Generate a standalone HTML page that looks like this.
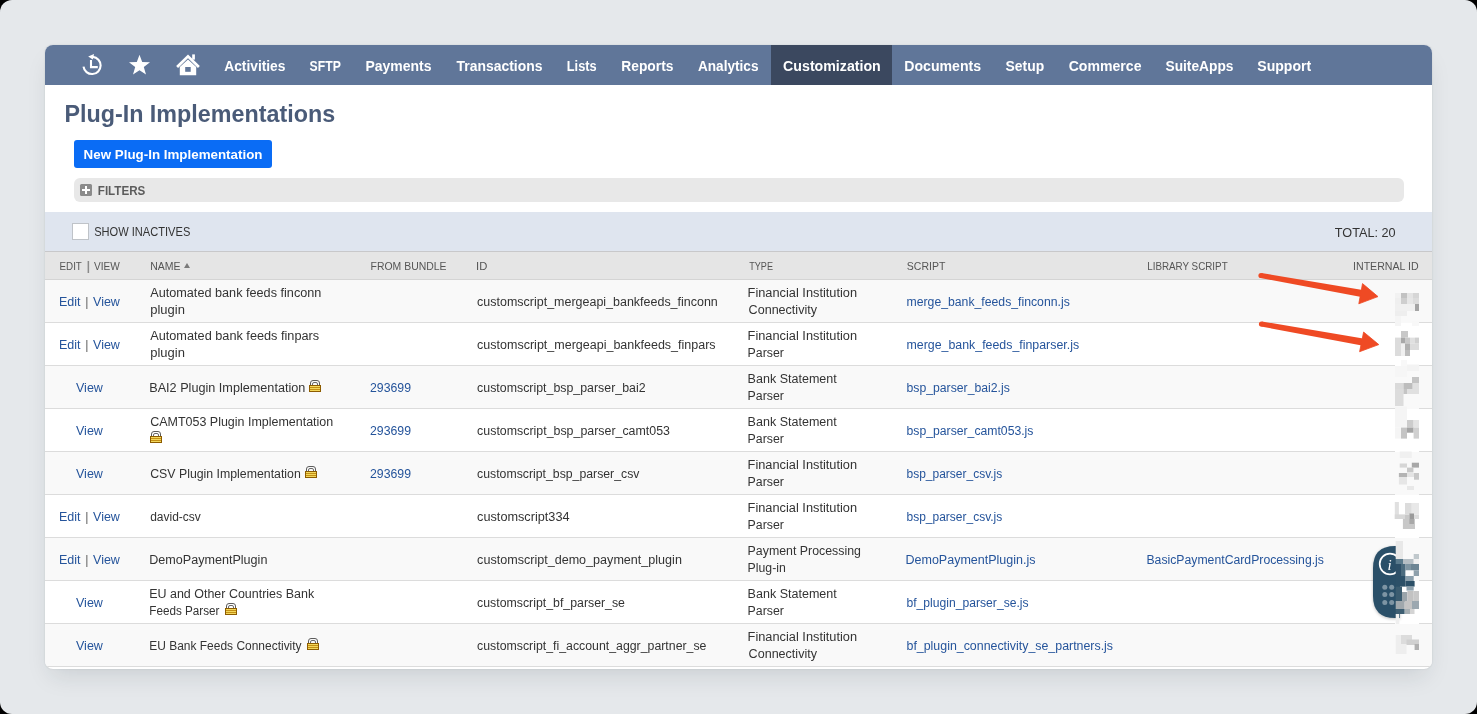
<!DOCTYPE html>
<html><head><meta charset="utf-8">
<style>
*{box-sizing:border-box;margin:0;padding:0}
html,body{width:1477px;height:714px;overflow:hidden;background:#000}
body{font-family:"Liberation Sans",sans-serif;position:relative}
#bg{position:absolute;left:0;top:0;width:1477px;height:714px;background:#e5e8eb;overflow:hidden;will-change:transform}
#corners{position:absolute;left:0;top:0;width:1477px;height:714px;border-radius:12px;box-shadow:0 0 0 40px #000}
#card{position:absolute;left:45px;top:45px;width:1387px;height:624px;background:#fff;border-radius:8px;overflow:hidden;box-shadow:0 0 2px rgba(20,30,40,0.13), 0 12px 24px -6px rgba(20,35,50,0.13)}
#nav{position:absolute;left:0;top:0;width:1387px;height:40px;background:#607699}
#nav .act{position:absolute;left:726px;top:0;width:121px;height:40px;background:#3b485f}
.ni{position:absolute;top:1px;height:38px;line-height:40px;color:#fff;font-weight:bold;font-size:14px;white-space:nowrap;transform-origin:0 0}
.abs{position:absolute;white-space:nowrap;transform-origin:0 0}
#title{left:20px;top:54px;font-size:23.2px;font-weight:bold;color:#4a5b78;line-height:30px}
#btn{position:absolute;left:29px;top:95px;width:198px;height:28px;background:#0a6cf5;border-radius:3px}
#btnt{left:38px;top:96px;height:26px;color:#fff;font-weight:bold;font-size:13px;line-height:28px}
#filters{position:absolute;left:29px;top:133px;width:1330px;height:24px;background:#e8e8e8;border-radius:6px}
#plus{position:absolute;left:6px;top:6px;width:12px;height:12px;background:#8b8b8b;border-radius:1.5px}
#plus:before{content:"";position:absolute;left:2px;top:5px;width:8px;height:2px;background:#fff}
#plus:after{content:"";position:absolute;left:5px;top:2px;width:2px;height:8px;background:#fff}
#ftxt{left:53px;top:136px;font-size:12.5px;font-weight:bold;color:#5c5c5c;line-height:20px}
#bluebar{position:absolute;left:0;top:167px;width:1387px;height:40px;background:#dfe5ef;border-bottom:1px solid #c8c8ca}
#cb{position:absolute;left:27px;top:178px;width:17px;height:17px;background:#fff;border:1px solid #bfc3c8}
#si{left:49px;top:177px;font-size:12px;color:#333;line-height:20px}
#total{left:1290px;top:178px;font-size:12.5px;color:#333;line-height:20px}
#hdr{position:absolute;left:0;top:207px;width:1387px;height:28px;background:#e5e5e5;border-bottom:1px solid #d4d4d4}
.h{position:absolute;top:213px;font-size:11px;color:#555;line-height:16px;white-space:nowrap;transform-origin:0 0}
.row{position:absolute;left:0;width:1387px;height:43px;border-bottom:1px solid #dcdcdc}
.c{position:absolute;top:1px;height:42px;display:flex;align-items:center;font-size:12.5px;line-height:17px;color:#333;white-space:nowrap}
.c a{color:#25549b;text-decoration:none}
.sep{color:#8f8f8f;font-size:13.5px;display:inline-block;vertical-align:-0.5px;transform:scaleX(1.3);margin:0 1.2px 0 0.8px}
.c.one{top:1px}
.c.c0{top:1px}
.c0{left:14px}
.c0v{left:31px}
.c1{left:105px}
.c2{left:325px}
.c3{left:432px}
.c4{left:704px}
.c5{left:862px}
.c6{left:1102px}
.lk{display:inline-block;width:12px;height:12px}
.ln{display:inline-block;transform-origin:0 0}
#rows{position:absolute;left:0;top:0}
</style></head><body>
<div id="bg">
<div id="card">
  <div id="nav">
    <div class="act"></div>
    <svg class="abs" style="left:36px;top:9px" width="22" height="22" viewBox="0 0 22 22">
      <path d="M2.5 12.6 A8.6 8.6 0 1 0 11.8 2.9" fill="none" stroke="#fff" stroke-width="2.1"/>
      <path d="M7.2 2.5 L13 0 L11.8 5.6 Z" fill="#fff"/>
      <path d="M10 6 V13.1 H16.8" fill="none" stroke="#fff" stroke-width="2.1"/>
    </svg>
    <svg class="abs" style="left:83px;top:9px" width="23" height="22" viewBox="0 0 23 22">
      <path d="M11.5 0.8 L14.2 8.1 L22 8.2 L15.8 13 L18 20.6 L11.5 16.2 L5 20.4 L7.2 12.9 L1 8.2 L8.8 8.1 Z" fill="#fff"/>
    </svg>
    <svg class="abs" style="left:130px;top:8px" width="26" height="24" viewBox="0 0 26 24">
      <path d="M2.1 14 L13 3.3 L23.9 14" fill="none" stroke="#fff" stroke-width="2.7"/>
      <rect x="17.2" y="1.4" width="2.7" height="5.2" fill="#fff"/>
      <path d="M4.8 14 L13 6.6 L21.2 14 V22.2 H4.8 Z" fill="#fff"/>
      <rect x="10.2" y="14" width="5.5" height="4.8" fill="#607699"/>
    </svg>
    <span id="n0" class="ni" style="left:179px;transform:translateX(0.20px) scaleX(0.9839)">Activities</span>
    <span id="n1" class="ni" style="left:265px;transform:translateX(-0.40px) scaleX(0.8722)">SFTP</span>
    <span id="n2" class="ni" style="left:320px;transform:translateX(0.40px) scaleX(0.9985)">Payments</span>
    <span id="n3" class="ni" style="left:411px;transform:translateX(0.60px) scaleX(0.9930)">Transactions</span>
    <span id="n4" class="ni" style="left:522px;transform:translateX(-0.20px) scaleX(0.9121)">Lists</span>
    <span id="n5" class="ni" style="left:576px;transform:translateX(0.30px) scaleX(0.9849)">Reports</span>
    <span id="n6" class="ni" style="left:653px;transform:translateX(0.00px) scaleX(0.9710)">Analytics</span>
    <span id="n7" class="ni" style="left:738px;transform:translateX(0.10px) scaleX(1.0125)">Customization</span>
    <span id="n8" class="ni" style="left:859px;transform:translateX(0.30px) scaleX(1.0079)">Documents</span>
    <span id="n9" class="ni" style="left:960px;transform:translateX(0.60px) scaleX(0.9923)">Setup</span>
    <span id="n10" class="ni" style="left:1023px;transform:translateX(0.70px) scaleX(1.0056)">Commerce</span>
    <span id="n11" class="ni" style="left:1120px;transform:translateX(0.50px) scaleX(0.9812)">SuiteApps</span>
    <span id="n12" class="ni" style="left:1212px;transform:translateX(0.30px) scaleX(1.0037)">Support</span>
  </div>
  <span id="title" class="abs" style="transform:translateX(-0.61px) scaleX(1.0056)">Plug-In Implementations</span>
  <div id="btn"></div>
  <span id="btnt" class="abs" style="transform:translateX(0.60px) scaleX(1.0276)">New Plug-In Implementation</span>
  <div id="filters"><div id="plus"></div></div>
  <span id="ftxt" class="abs" style="transform:translateX(-0.20px) scaleX(0.9294)">FILTERS</span>
  <div id="bluebar"></div>
  <div id="cb"></div>
  <span id="si" class="abs" style="transform:translateX(0.20px) scaleX(0.9240)">SHOW INACTIVES</span>
  <span id="total" class="abs" style="transform:translateX(-0.20px) scaleX(1.0133)">TOTAL: 20</span>
  <div id="hdr"></div>
  <span id="h0" class="h" style="left:14px;transform:translateX(0.50px) scaleX(0.8920)">EDIT</span>
  <span id="h0b" class="h" style="left:40.6px;top:213px;font-size:13px;color:#8a8a8a;transform:scaleX(1.4);">|</span>
  <span id="h0c" class="h" style="left:49px;transform:translateX(0.00px) scaleX(0.9179)">VIEW</span>
  <span id="h1" class="h" style="left:105px;transform:translateX(0.20px) scaleX(0.9531)">NAME</span>
  <svg class="abs" style="left:139px;top:218px" width="6" height="5" viewBox="0 0 6 5"><path d="M0 5 L3 0 L6 5Z" fill="#7a7a7a"/></svg>
  <span id="h2" class="h" style="left:325px;transform:translateX(0.60px) scaleX(0.9475)">FROM BUNDLE</span>
  <span id="h3" class="h" style="left:432px;transform:translateX(-0.92px) scaleX(1.0200)">ID</span>
  <span id="h4" class="h" style="left:704px;transform:translateX(0.20px) scaleX(0.8276)">TYPE</span>
  <span id="h5" class="h" style="left:862px;transform:translateX(-0.20px) scaleX(0.9550)">SCRIPT</span>
  <span id="h6" class="h" style="left:1102px;transform:translateX(0.20px) scaleX(0.8933)">LIBRARY SCRIPT</span>
  <span id="h7" class="h" style="left:1309px;transform:translateX(-0.96px) scaleX(0.9627)">INTERNAL ID</span>
<div id="rows">
<div class="row" style="top:235px;background:#f9f9f9">
<div class="c c0 one"><div><a>Edit</a> <span class="sep">|</span> <a>View</a></div></div>
<div class="c c1"><div><span class="ln" id="r0n_0" style="transform:translateX(0.20px) scaleX(1.0136)">Automated bank feeds finconn</span><br><span class="ln" id="r0n_1" style="transform:translateX(0.20px) scaleX(1.0394)">plugin</span></div></div>
<div class="c c3 one"><div><span class="ln" id="r0i_0" style="transform:translateX(0.10px) scaleX(0.9983)">customscript_mergeapi_bankfeeds_finconn</span></div></div>
<div class="c c4"><div><span class="ln" id="r0t_0" style="transform:translateX(-1.42px) scaleX(1.0236)">Financial Institution</span><br><span class="ln" id="r0t_1" style="transform:translateX(-0.40px) scaleX(1.0044)">Connectivity</span></div></div>
<div class="c c5 one"><div><span class="ln" id="r0s_0" style="transform:translateX(-0.50px) scaleX(0.9790)"><a>merge_bank_feeds_finconn.js</a></span></div></div>
</div>
<div class="row" style="top:278px;background:#ffffff">
<div class="c c0 one"><div><a>Edit</a> <span class="sep">|</span> <a>View</a></div></div>
<div class="c c1"><div><span class="ln" id="r1n_0" style="transform:translateX(0.20px) scaleX(1.0175)">Automated bank feeds finpars</span><br><span class="ln" id="r1n_1" style="transform:translateX(0.20px) scaleX(1.0394)">plugin</span></div></div>
<div class="c c3 one"><div><span class="ln" id="r1i_0" style="transform:translateX(0.10px) scaleX(1.0008)">customscript_mergeapi_bankfeeds_finpars</span></div></div>
<div class="c c4"><div><span class="ln" id="r1t_0" style="transform:translateX(-1.42px) scaleX(1.0236)">Financial Institution</span><br><span class="ln" id="r1t_1" style="transform:translateX(-1.39px) scaleX(0.9861)">Parser</span></div></div>
<div class="c c5 one"><div><span class="ln" id="r1s_0" style="transform:translateX(-0.50px) scaleX(0.9897)"><a>merge_bank_feeds_finparser.js</a></span></div></div>
</div>
<div class="row" style="top:321px;background:#f9f9f9">
<div class="c c0v one"><div><a>View</a></div></div>
<div class="c c1 one"><div><span class="ln" id="r2n_0" style="transform:translateX(-0.81px) scaleX(1.0124)">BAI2 Plugin Implementation</span></div></div>
<div class="c c2 one"><div><span class="ln" id="r2b_0" style="transform:translateX(0.00px) scaleX(0.9829)"><a>293699</a></span></div></div>
<div class="c c3 one"><div><span class="ln" id="r2i_0" style="transform:translateX(0.10px) scaleX(0.9894)">customscript_bsp_parser_bai2</span></div></div>
<div class="c c4"><div><span class="ln" id="r2t_0" style="transform:translateX(-1.40px) scaleX(1.0023)">Bank Statement</span><br><span class="ln" id="r2t_1" style="transform:translateX(-1.39px) scaleX(0.9861)">Parser</span></div></div>
<div class="c c5 one"><div><span class="ln" id="r2s_0" style="transform:translateX(-0.50px) scaleX(0.9781)"><a>bsp_parser_bai2.js</a></span></div></div>
</div>
<div class="row" style="top:364px;background:#ffffff">
<div class="c c0v one"><div><a>View</a></div></div>
<div class="c c1"><div><span class="ln" id="r3n_0" style="transform:translateX(0.20px) scaleX(0.9978)">CAMT053 Plugin Implementation</span><br><span class="lk"></span></div></div>
<div class="c c2 one"><div><span class="ln" id="r3b_0" style="transform:translateX(0.00px) scaleX(0.9829)"><a>293699</a></span></div></div>
<div class="c c3 one"><div><span class="ln" id="r3i_0" style="transform:translateX(0.10px) scaleX(0.9912)">customscript_bsp_parser_camt053</span></div></div>
<div class="c c4"><div><span class="ln" id="r3t_0" style="transform:translateX(-1.40px) scaleX(1.0023)">Bank Statement</span><br><span class="ln" id="r3t_1" style="transform:translateX(-1.39px) scaleX(0.9861)">Parser</span></div></div>
<div class="c c5 one"><div><span class="ln" id="r3s_0" style="transform:translateX(-0.50px) scaleX(0.9769)"><a>bsp_parser_camt053.js</a></span></div></div>
</div>
<div class="row" style="top:407px;background:#f9f9f9">
<div class="c c0v one"><div><a>View</a></div></div>
<div class="c c1 one"><div><span class="ln" id="r4n_0" style="transform:translateX(0.20px) scaleX(0.9850)">CSV Plugin Implementation</span></div></div>
<div class="c c2 one"><div><span class="ln" id="r4b_0" style="transform:translateX(0.00px) scaleX(0.9829)"><a>293699</a></span></div></div>
<div class="c c3 one"><div><span class="ln" id="r4i_0" style="transform:translateX(0.10px) scaleX(0.9818)">customscript_bsp_parser_csv</span></div></div>
<div class="c c4"><div><span class="ln" id="r4t_0" style="transform:translateX(-1.42px) scaleX(1.0236)">Financial Institution</span><br><span class="ln" id="r4t_1" style="transform:translateX(-1.39px) scaleX(0.9861)">Parser</span></div></div>
<div class="c c5 one"><div><span class="ln" id="r4s_0" style="transform:translateX(-0.50px) scaleX(0.9590)"><a>bsp_parser_csv.js</a></span></div></div>
</div>
<div class="row" style="top:450px;background:#ffffff">
<div class="c c0 one"><div><a>Edit</a> <span class="sep">|</span> <a>View</a></div></div>
<div class="c c1 one"><div><span class="ln" id="r5n_0" style="transform:translateX(0.20px) scaleX(0.9585)">david-csv</span></div></div>
<div class="c c3 one"><div><span class="ln" id="r5i_0" style="transform:translateX(0.10px) scaleX(1.0154)">customscript334</span></div></div>
<div class="c c4"><div><span class="ln" id="r5t_0" style="transform:translateX(-1.42px) scaleX(1.0236)">Financial Institution</span><br><span class="ln" id="r5t_1" style="transform:translateX(-1.39px) scaleX(0.9861)">Parser</span></div></div>
<div class="c c5 one"><div><span class="ln" id="r5s_0" style="transform:translateX(-0.50px) scaleX(0.9590)"><a>bsp_parser_csv.js</a></span></div></div>
</div>
<div class="row" style="top:493px;background:#f9f9f9">
<div class="c c0 one"><div><a>Edit</a> <span class="sep">|</span> <a>View</a></div></div>
<div class="c c1 one"><div><span class="ln" id="r6n_0" style="transform:translateX(-0.81px) scaleX(1.0069)">DemoPaymentPlugin</span></div></div>
<div class="c c3 one"><div><span class="ln" id="r6i_0" style="transform:translateX(0.10px) scaleX(1.0059)">customscript_demo_payment_plugin</span></div></div>
<div class="c c4"><div><span class="ln" id="r6t_0" style="transform:translateX(-1.39px) scaleX(0.9885)">Payment Processing</span><br><span class="ln" id="r6t_1" style="transform:translateX(-1.38px) scaleX(0.9816)">Plug-in</span></div></div>
<div class="c c5 one"><div><span class="ln" id="r6s_0" style="transform:translateX(-1.50px) scaleX(1.0008)"><a>DemoPaymentPlugin.js</a></span></div></div>
<div class="c c6 one"><div><span class="ln" id="r6l_0" style="transform:translateX(-0.58px) scaleX(0.9789)"><a>BasicPaymentCardProcessing.js</a></span></div></div>
</div>
<div class="row" style="top:536px;background:#ffffff">
<div class="c c0v one"><div><a>View</a></div></div>
<div class="c c1"><div><span class="ln" id="r7n_0" style="transform:translateX(-0.80px) scaleX(0.9976)">EU and Other Countries Bank</span><br><span class="ln" id="r7n_1" style="transform:translateX(-0.74px) scaleX(0.9355)">Feeds Parser</span></div></div>
<div class="c c3 one"><div><span class="ln" id="r7i_0" style="transform:translateX(0.10px) scaleX(0.9853)">customscript_bf_parser_se</span></div></div>
<div class="c c4"><div><span class="ln" id="r7t_0" style="transform:translateX(-1.40px) scaleX(1.0023)">Bank Statement</span><br><span class="ln" id="r7t_1" style="transform:translateX(-1.39px) scaleX(0.9861)">Parser</span></div></div>
<div class="c c5 one"><div><span class="ln" id="r7s_0" style="transform:translateX(-0.50px) scaleX(0.9706)"><a>bf_plugin_parser_se.js</a></span></div></div>
</div>
<div class="row" style="top:579px;background:#f9f9f9">
<div class="c c0v one"><div><a>View</a></div></div>
<div class="c c1 one"><div><span class="ln" id="r8n_0" style="transform:translateX(-0.76px) scaleX(0.9575)">EU Bank Feeds Connectivity</span></div></div>
<div class="c c3 one"><div><span class="ln" id="r8i_0" style="transform:translateX(0.10px) scaleX(0.9853)">customscript_fi_account_aggr_partner_se</span></div></div>
<div class="c c4"><div><span class="ln" id="r8t_0" style="transform:translateX(-1.42px) scaleX(1.0236)">Financial Institution</span><br><span class="ln" id="r8t_1" style="transform:translateX(-0.40px) scaleX(1.0044)">Connectivity</span></div></div>
<div class="c c5 one"><div><span class="ln" id="r8s_0" style="transform:translateX(-0.50px) scaleX(0.9909)"><a>bf_plugin_connectivity_se_partners.js</a></span></div></div>
</div>
</div>
</div>
<svg id="ov" width="1477" height="714" viewBox="0 0 1477 714" style="position:absolute;left:0;top:0"><defs><filter id="wsh" x="-50%" y="-50%" width="200%" height="200%"><feDropShadow dx="0" dy="1" stdDeviation="1.5" flood-opacity="0.25"/></filter></defs><rect x="1395" y="280" width="24" height="43" fill="#f9f9f9"/><rect x="1395" y="323" width="24" height="43" fill="#ffffff"/><rect x="1395" y="366" width="24" height="43" fill="#f9f9f9"/><rect x="1395" y="409" width="24" height="43" fill="#ffffff"/><rect x="1395" y="452" width="24" height="43" fill="#f9f9f9"/><rect x="1395" y="495" width="24" height="43" fill="#ffffff"/><rect x="1395" y="538" width="24" height="43" fill="#f9f9f9"/><rect x="1395" y="581" width="24" height="43" fill="#ffffff"/><rect x="1395" y="624" width="24" height="36" fill="#f9f9f9"/><g filter="url(#wsh)"><path d="M1400 546 V618 H1395 Q1373 618 1373 596 V568 Q1373 546 1395 546 Z" fill="#2c5068"/></g><circle cx="1390" cy="564" r="10.3" fill="none" stroke="#fff" stroke-width="1.7"/><text x="1387.5" y="569.5" font-family="Liberation Serif" font-style="italic" font-size="15" fill="#fff">i</text><circle cx="1384.8" cy="587.3" r="2.5" fill="#7d94a3"/><circle cx="1384.8" cy="594.6" r="2.5" fill="#7d94a3"/><circle cx="1384.8" cy="602.5" r="2.5" fill="#7d94a3"/><circle cx="1391.7" cy="587.3" r="2.5" fill="#7d94a3"/><circle cx="1391.7" cy="594.6" r="2.5" fill="#7d94a3"/><circle cx="1391.7" cy="602.5" r="2.5" fill="#7d94a3"/><rect x="1395" y="293" width="6" height="5" fill="#f2f2f2"/><rect x="1401" y="293" width="6" height="5" fill="#c2c2c2"/><rect x="1407" y="293" width="6" height="5" fill="#e4e4e4"/><rect x="1413" y="293" width="6" height="5" fill="#d6d6d6"/><rect x="1395" y="298" width="6" height="6" fill="#efefef"/><rect x="1401" y="298" width="6" height="6" fill="#cecece"/><rect x="1407" y="298" width="6" height="6" fill="#e6e6e6"/><rect x="1413" y="298" width="6" height="6" fill="#dcdcdc"/><rect x="1395" y="304" width="20" height="7" fill="#f0f0f0"/><rect x="1415" y="304" width="4" height="7" fill="#a4a4a4"/><rect x="1395" y="311" width="12" height="5" fill="#eeeeee"/><rect x="1395" y="316" width="6" height="10" fill="#f5f5f5"/><rect x="1412" y="321" width="7" height="5" fill="#f8f8f8"/><rect x="1401" y="331" width="7" height="6.6" fill="#c8c8c8"/><rect x="1395" y="337.6" width="6" height="18.4" fill="#dcdcdc"/><rect x="1401" y="337.6" width="4" height="6" fill="#a8a8a8"/><rect x="1405" y="337.6" width="5" height="6" fill="#c8c8c8"/><rect x="1410" y="337.6" width="5" height="6" fill="#e0e0e0"/><rect x="1415" y="337.6" width="4" height="6" fill="#d0d0d0"/><rect x="1405" y="343.5" width="5" height="6.5" fill="#b0b0b0"/><rect x="1410" y="343.5" width="9" height="6.5" fill="#dcdcdc"/><rect x="1405" y="350" width="5" height="6" fill="#bcbcbc"/><rect x="1401" y="343.5" width="4" height="12.5" fill="#f0f0f0"/><rect x="1401" y="360" width="6" height="6" fill="#f8f8f8"/><rect x="1395" y="366" width="12" height="11" fill="#f6f6f6"/><rect x="1407" y="364.5" width="12" height="6.5" fill="#f3f3f3"/><rect x="1412" y="377" width="7" height="6" fill="#c4c4c4"/><rect x="1395" y="383" width="8.5" height="6" fill="#dadada"/><rect x="1403.5" y="383" width="9.2" height="6" fill="#bdbdbd"/><rect x="1412.7" y="383" width="6.3" height="6" fill="#e0e0e0"/><rect x="1395" y="389" width="8.5" height="17" fill="#dcdcdc"/><rect x="1403.5" y="389" width="3.5" height="5" fill="#c4c4c4"/><rect x="1407" y="389" width="12" height="5" fill="#e0e0e0"/><rect x="1395" y="406.6" width="12" height="21" fill="#f5f5f5"/><rect x="1407" y="420" width="6.6" height="7.6" fill="#cccccc"/><rect x="1413.6" y="420" width="5.4" height="7.6" fill="#e4e4e4"/><rect x="1401" y="427.6" width="6" height="11" fill="#c4c4c4"/><rect x="1407" y="427.6" width="6.6" height="5.1" fill="#a4a4a4"/><rect x="1413.6" y="427.6" width="5.4" height="11" fill="#d0d0d0"/><rect x="1395" y="427.6" width="6" height="11" fill="#f5f5f5"/><rect x="1399.7" y="451.5" width="12" height="6.5" fill="#f0f0f0"/><rect x="1399.7" y="463.5" width="7.3" height="4.1" fill="#d6d6d6"/><rect x="1411.8" y="462.7" width="7.2" height="4.9" fill="#a8a8a8"/><rect x="1407" y="467.6" width="6.4" height="4.8" fill="#c8c8c8"/><rect x="1398.9" y="473" width="8.1" height="4" fill="#b4b4b4"/><rect x="1407" y="473" width="7" height="4" fill="#e4e4e4"/><rect x="1414" y="473" width="5" height="6.7" fill="#c8c8c8"/><rect x="1398.9" y="477" width="8.1" height="7.5" fill="#e6e6e6"/><rect x="1407" y="486" width="7" height="4" fill="#e8e8e8"/><rect x="1394.8" y="502" width="4.1" height="17" fill="#e0e0e0"/><rect x="1405" y="503" width="6.8" height="11" fill="#dcdcdc"/><rect x="1411.8" y="503" width="7.2" height="11" fill="#e8e8e8"/><rect x="1394.8" y="514.4" width="10.2" height="4.6" fill="#d8d8d8"/><rect x="1405" y="514.4" width="4.4" height="4.6" fill="#c8c8c8"/><rect x="1409.4" y="513.5" width="4.6" height="5.5" fill="#9a9a9a"/><rect x="1414" y="514.4" width="5" height="4.6" fill="#dcdcdc"/><rect x="1402.9" y="519" width="12.1" height="10" fill="#c8c8c8"/><rect x="1409.4" y="519" width="4.6" height="5" fill="#a8a8a8"/><rect x="1395.7" y="541" width="7.3" height="18" fill="#e8e8e8"/><rect x="1413.7" y="554" width="5.3" height="5" fill="#c0c8cc"/><rect x="1395.7" y="559" width="7.3" height="5" fill="#5a7a8c"/><rect x="1403" y="559" width="10.7" height="5" fill="#b5bec4"/><rect x="1413.7" y="559" width="5.3" height="5" fill="#f0f0f0"/><rect x="1395.7" y="564" width="5.3" height="12" fill="#2e5068"/><rect x="1401" y="564" width="4.6" height="12" fill="#4b6b7e"/><rect x="1405.6" y="564" width="5.4" height="6.5" fill="#7f95a2"/><rect x="1411" y="564" width="8" height="6.5" fill="#6d8594"/><rect x="1405.6" y="570.5" width="8.1" height="5.5" fill="#fafafa"/><rect x="1413.7" y="570.5" width="5.3" height="5.5" fill="#8ea0ab"/><rect x="1395.7" y="576" width="9.9" height="10.6" fill="#2c5068"/><rect x="1405.6" y="576" width="8.1" height="5" fill="#8a9fac"/><rect x="1405.6" y="581" width="9" height="5.6" fill="#2c5068"/><rect x="1406.5" y="586.6" width="7.2" height="4" fill="#8fa2ae"/><rect x="1395.7" y="586.6" width="6.3" height="14.4" fill="#3b5c70"/><rect x="1402" y="592" width="5.4" height="10" fill="#9aa4aa"/><rect x="1407.4" y="591" width="6.3" height="10" fill="#c2c2c2"/><rect x="1413.7" y="591" width="5.3" height="10" fill="#c8c8c8"/><rect x="1412" y="601" width="7" height="8" fill="#9ca8b0"/><rect x="1395.7" y="601" width="9" height="8" fill="#a0a8ad"/><rect x="1404.7" y="601" width="7.3" height="8" fill="#c4c4c4"/><rect x="1395.7" y="609" width="9" height="5" fill="#3d5e72"/><rect x="1404.7" y="609" width="5.3" height="5" fill="#a8b0b4"/><rect x="1410" y="609" width="4.5" height="5" fill="#d4d4d4"/><rect x="1395.7" y="614" width="3.6" height="10" fill="#efefef"/><rect x="1395.7" y="635" width="10.8" height="19" fill="#eeeeee"/><rect x="1401" y="635" width="11" height="9" fill="#dcdcdc"/><rect x="1406.5" y="639.5" width="12.5" height="5.5" fill="#d0d0d0"/><rect x="1414.6" y="644" width="4.4" height="6" fill="#b0b0b0"/><g transform="translate(309,380)"><path d="M1.5 5.5 V3 Q1.5 0.5 4 0.5 H8 Q10.5 0.5 10.5 3 V5.5" fill="none" stroke="#5c5c5c" stroke-width="1"/><path d="M3.5 5.5 V4 Q3.5 2.5 5 2.5 H7 Q8.5 2.5 8.5 4 V5.5" fill="none" stroke="#6a6a6a" stroke-width="1"/><rect x="0.5" y="5.5" width="11" height="6" fill="#f3d85c" stroke="#8d5c00" stroke-width="1"/><rect x="1" y="7" width="10" height="1" fill="#c48f14"/><rect x="1" y="9" width="10" height="1" fill="#c48f14"/></g><g transform="translate(150,431)"><path d="M1.5 5.5 V3 Q1.5 0.5 4 0.5 H8 Q10.5 0.5 10.5 3 V5.5" fill="none" stroke="#5c5c5c" stroke-width="1"/><path d="M3.5 5.5 V4 Q3.5 2.5 5 2.5 H7 Q8.5 2.5 8.5 4 V5.5" fill="none" stroke="#6a6a6a" stroke-width="1"/><rect x="0.5" y="5.5" width="11" height="6" fill="#f3d85c" stroke="#8d5c00" stroke-width="1"/><rect x="1" y="7" width="10" height="1" fill="#c48f14"/><rect x="1" y="9" width="10" height="1" fill="#c48f14"/></g><g transform="translate(305,466)"><path d="M1.5 5.5 V3 Q1.5 0.5 4 0.5 H8 Q10.5 0.5 10.5 3 V5.5" fill="none" stroke="#5c5c5c" stroke-width="1"/><path d="M3.5 5.5 V4 Q3.5 2.5 5 2.5 H7 Q8.5 2.5 8.5 4 V5.5" fill="none" stroke="#6a6a6a" stroke-width="1"/><rect x="0.5" y="5.5" width="11" height="6" fill="#f3d85c" stroke="#8d5c00" stroke-width="1"/><rect x="1" y="7" width="10" height="1" fill="#c48f14"/><rect x="1" y="9" width="10" height="1" fill="#c48f14"/></g><g transform="translate(225,603)"><path d="M1.5 5.5 V3 Q1.5 0.5 4 0.5 H8 Q10.5 0.5 10.5 3 V5.5" fill="none" stroke="#5c5c5c" stroke-width="1"/><path d="M3.5 5.5 V4 Q3.5 2.5 5 2.5 H7 Q8.5 2.5 8.5 4 V5.5" fill="none" stroke="#6a6a6a" stroke-width="1"/><rect x="0.5" y="5.5" width="11" height="6" fill="#f3d85c" stroke="#8d5c00" stroke-width="1"/><rect x="1" y="7" width="10" height="1" fill="#c48f14"/><rect x="1" y="9" width="10" height="1" fill="#c48f14"/></g><g transform="translate(307,638)"><path d="M1.5 5.5 V3 Q1.5 0.5 4 0.5 H8 Q10.5 0.5 10.5 3 V5.5" fill="none" stroke="#5c5c5c" stroke-width="1"/><path d="M3.5 5.5 V4 Q3.5 2.5 5 2.5 H7 Q8.5 2.5 8.5 4 V5.5" fill="none" stroke="#6a6a6a" stroke-width="1"/><rect x="0.5" y="5.5" width="11" height="6" fill="#f3d85c" stroke="#8d5c00" stroke-width="1"/><rect x="1" y="7" width="10" height="1" fill="#c48f14"/><rect x="1" y="9" width="10" height="1" fill="#c48f14"/></g><circle cx="1261" cy="275.5" r="2.6" fill="#ef4a24"/><polygon points="1261.45,272.94 1362.61,290.06 1361.39,296.94 1260.55,278.06" fill="#ef4a24"/><polygon points="1378,296.6 1362.5,283.6 1358.8,303.8" fill="#ef4a24" stroke="#ef4a24" stroke-width="0.8" stroke-linejoin="round"/><circle cx="1261.5" cy="324" r="2.6" fill="#ef4a24"/><polygon points="1261.95,321.44 1363.11,338.56 1361.89,345.44 1261.05,326.56" fill="#ef4a24"/><polygon points="1378.8,344.6 1363.6,332 1359.6,351.7" fill="#ef4a24" stroke="#ef4a24" stroke-width="0.8" stroke-linejoin="round"/></svg>
<div id="corners"></div>
</div>
</body></html>
